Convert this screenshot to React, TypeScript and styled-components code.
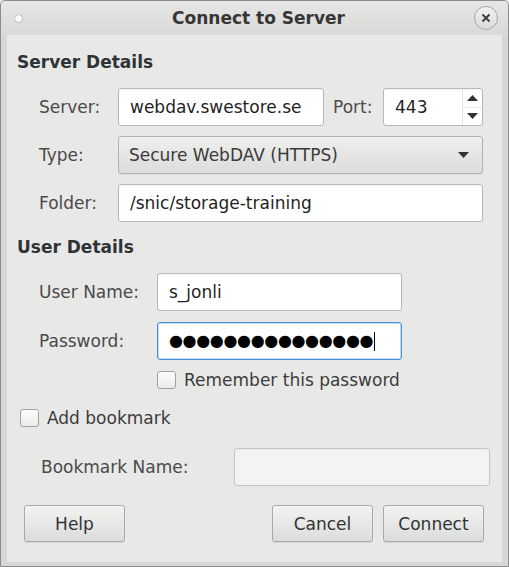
import React from "react";
import styled, { createGlobalStyle } from "styled-components";

const Global = createGlobalStyle`
  html, body { margin: 0; padding: 0; background: #e8e8e7; }
  body { font-family: "DejaVu Sans", "Liberation Sans", sans-serif; font-size: 17px; }
  * { box-sizing: border-box; }
`;

const Window = styled.div`
  width: 509px;
  border: 1px solid #8c8c8c;
  border-radius: 5px 5px 0 0;
  background: #d7d7d6;
  display: flex;
  flex-direction: column;
`;

const TitleBar = styled.div`
  height: 34px;
  display: grid;
  grid-template-columns: 40px 1fr 40px;
  align-items: center;
  background: linear-gradient(#e6e6e5, #d9d9d8);
  border-radius: 4px 4px 0 0;
`;

const Dot = styled.div`
  width: 9px;
  height: 9px;
  border-radius: 50%;
  background: #fbfbfb;
  border: 1px solid #b9b9b9;
  margin-left: 13px;
`;

const Title = styled.div`
  text-align: center;
  font-weight: bold;
  font-size: 17px;
  color: #363636;
  padding-left: 8px;
`;

const CloseBtn = styled.div`
  width: 24px;
  height: 24px;
  border-radius: 50%;
  border: 1px solid #a6a6a6;
  background: linear-gradient(#f2f2f1, #dadad9);
  display: flex;
  align-items: center;
  justify-content: center;
  margin-left: 6px;
`;

const Content = styled.div`
  margin: 0 6px 4px 6px;
  background: #e8e8e7;
  padding: 17px 0 20px 0;
  display: flex;
  flex-direction: column;
`;

const Heading = styled.div<{ $mt?: number }>`
  font-weight: bold;
  line-height: 20px;
  height: 20px;
  color: #2e3436;
  margin-left: 10px;
  margin-top: ${(p) => p.$mt ?? 0}px;
`;

const ServerGrid = styled.div`
  margin: 16px 0 0 32px;
  display: grid;
  grid-template-columns: 79px 206px 59px 100px;
  grid-auto-rows: 38px;
  row-gap: 10px;
  align-items: center;
`;

const UserGrid = styled.div`
  margin: 16px 0 0 32px;
  display: grid;
  grid-template-columns: 118px 245px;
  grid-template-rows: 38px 38px 18px;
  row-gap: 11px;
  align-items: center;
`;

const Label = styled.div<{ $pad?: number }>`
  color: #4a4a4a;
  white-space: nowrap;
  padding-left: ${(p) => p.$pad ?? 0}px;
`;

const Entry = styled.div<{ $span?: boolean; $focus?: boolean; $disabled?: boolean }>`
  height: 38px;
  grid-column: ${(p) => (p.$span ? "2 / 5" : "auto")};
  background: ${(p) => (p.$disabled ? "#f3f3f2" : "#ffffff")};
  border: 1px solid ${(p) => (p.$focus ? "#4a90d9" : p.$disabled ? "#c6c6c3" : "#b8b8b4")};
  box-shadow: ${(p) =>
    p.$focus ? "inset 0 0 0 1px rgba(74,144,217,0.35)" : "inset 0 1px 1px rgba(0,0,0,0.04)"};
  border-radius: 3px;
  display: flex;
  align-items: center;
  padding-left: 11px;
  color: #1f1f1f;
  position: relative;
  overflow: hidden;
`;

const Spinner = styled.div`
  position: absolute;
  right: 0;
  top: 0;
  bottom: 0;
  width: 20px;
  border-left: 1px solid #e2e2e0;
  display: flex;
  flex-direction: column;
`;

const SpinHalf = styled.div<{ $top?: boolean }>`
  flex: 1;
  display: flex;
  align-items: center;
  justify-content: center;
  border-bottom: ${(p) => (p.$top ? "1px solid #ececea" : "none")};
`;

const Combo = styled.div`
  grid-column: 2 / 5;
  height: 38px;
  border: 1px solid #b2b2ae;
  border-radius: 3px;
  background: linear-gradient(#efefee, #dcdcda);
  box-shadow: 0 1px 0 rgba(0, 0, 0, 0.06);
  display: flex;
  align-items: center;
  justify-content: space-between;
  padding: 0 13px 0 10px;
  color: #3a3a3a;
`;

const Masked = styled.span`
  font-size: 16px;
  letter-spacing: -0.35px;
  color: #000;
  line-height: 1;
  white-space: nowrap;
`;

const Caret = styled.span`
  width: 1px;
  height: 19px;
  flex: none;
  background: #000;
  margin-left: 1px;
`;

const CheckRow = styled.label<{ $ml?: number; $mt?: number; $col?: string }>`
  display: flex;
  align-items: center;
  gap: 8px;
  height: 18px;
  margin-left: ${(p) => p.$ml ?? 0}px;
  margin-top: ${(p) => p.$mt ?? 0}px;
  grid-column: ${(p) => p.$col ?? "auto"};
  color: #3c3c3c;
  white-space: nowrap;
`;

const Box = styled.span`
  width: 19px;
  height: 18px;
  border: 1px solid #a2a29f;
  border-radius: 3px;
  background: linear-gradient(#fdfdfd, #ebebea);
`;

const BookmarkRow = styled.div`
  margin: 21px 0 0 34px;
  display: grid;
  grid-template-columns: 193px 256px;
  align-items: center;
`;

const ButtonRow = styled.div`
  margin: 19px 18px 0 17px;
  display: flex;
  gap: 10px;
`;

const Button = styled.div<{ $w: number; $push?: boolean }>`
  width: ${(p) => p.$w}px;
  height: 37px;
  margin-left: ${(p) => (p.$push ? "auto" : "0")};
  border: 1px solid #a9a9a6;
  border-radius: 3px;
  background: linear-gradient(#f3f3f2, #dcdcda);
  box-shadow: 0 1px 0 rgba(0, 0, 0, 0.08);
  display: flex;
  align-items: center;
  justify-content: center;
  color: #2e3436;
`;

const Tri = ({ up }: { up?: boolean }) => (
  <svg width="11" height="6" viewBox="0 0 11 6">
    <path d={up ? "M0 6 L5.5 0 L11 6 Z" : "M0 0 L5.5 6 L11 0 Z"} fill="#2e3436" />
  </svg>
);

export default function App() {
  return (
    <>
      <Global />
      <Window>
        <TitleBar>
          <Dot />
          <Title>Connect to Server</Title>
          <CloseBtn>
            <svg width="10" height="10" viewBox="0 0 10 10">
              <path d="M1.5 1.5 L8.5 8.5 M8.5 1.5 L1.5 8.5" stroke="#3a3a3a" strokeWidth="1.8" />
            </svg>
          </CloseBtn>
        </TitleBar>
        <Content>
          <Heading>Server Details</Heading>
          <ServerGrid>
            <Label>Server:</Label>
            <Entry>webdav.swestore.se</Entry>
            <Label $pad={9}>Port:</Label>
            <Entry>
              443
              <Spinner>
                <SpinHalf $top>
                  <Tri up />
                </SpinHalf>
                <SpinHalf>
                  <Tri />
                </SpinHalf>
              </Spinner>
            </Entry>
            <Label>Type:</Label>
            <Combo>
              <span>Secure WebDAV (HTTPS)</span>
              <Tri />
            </Combo>
            <Label>Folder:</Label>
            <Entry $span>/snic/storage-training</Entry>
          </ServerGrid>
          <Heading $mt={15}>User Details</Heading>
          <UserGrid>
            <Label>User Name:</Label>
            <Entry>s_jonli</Entry>
            <Label>Password:</Label>
            <Entry $focus>
              <Masked>●●●●●●●●●●●●●●●</Masked>
              <Caret />
            </Entry>
            <CheckRow $col="2">
              <Box />
              Remember this password
            </CheckRow>
          </UserGrid>
          <CheckRow $ml={13} $mt={20}>
            <Box />
            Add bookmark
          </CheckRow>
          <BookmarkRow>
            <Label>Bookmark Name:</Label>
            <Entry $disabled />
          </BookmarkRow>
          <ButtonRow>
            <Button $w={101}>Help</Button>
            <Button $w={101} $push>
              Cancel
            </Button>
            <Button $w={101}>Connect</Button>
          </ButtonRow>
        </Content>
      </Window>
    </>
  );
}
